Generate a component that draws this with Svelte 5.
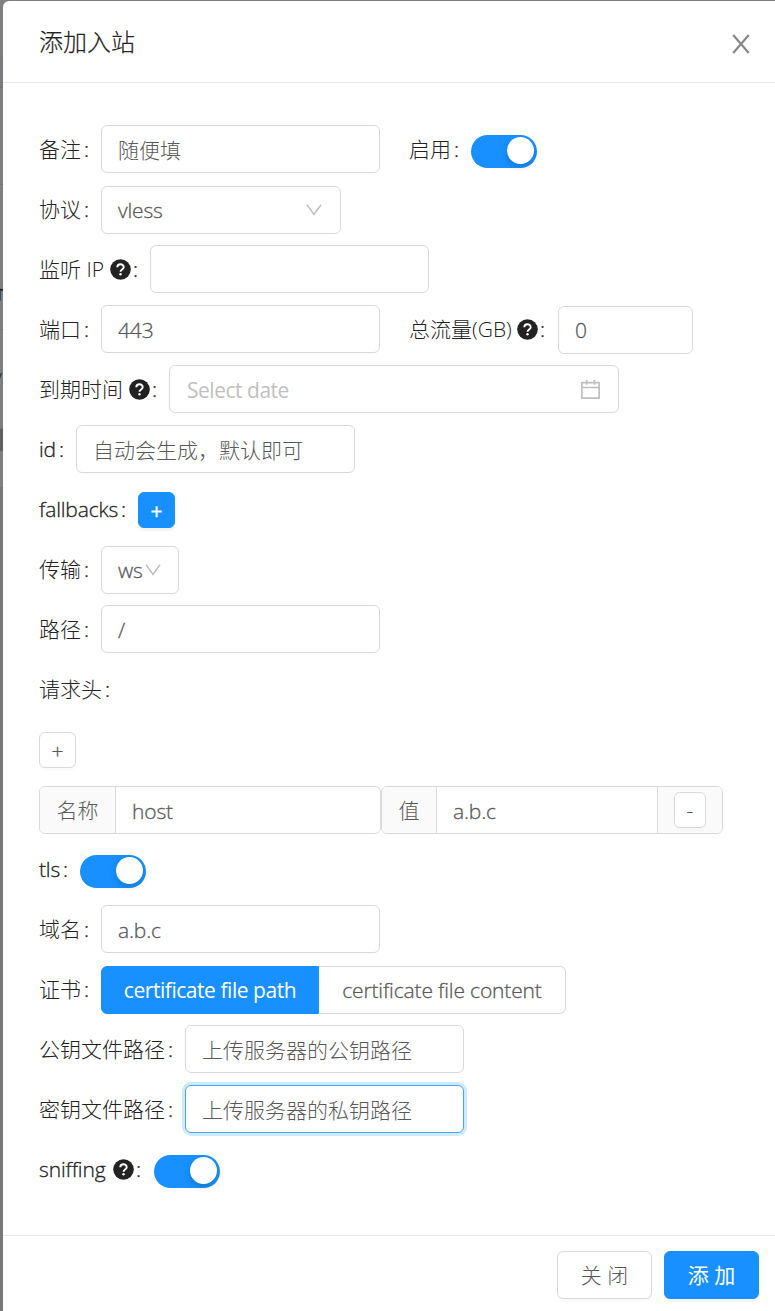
<script>
  const calc = 'M880 184H712v-64c0-4.400-3.600-8-8-8h-56c-4.400 0-8 3.600-8 8v64H384v-64c0-4.400-3.600-8-8-8h-56c-4.400 0-8 3.600-8 8v64H144c-17.700 0-32 14.300-32 32v664c0 17.700 14.300 32 32 32h736c17.700 0 32-14.300 32-32V216c0-17.700-14.300-32-32-32zm-40 656H184V460h656v380zM184 392V256h128v48c0 4.400 3.600 8 8 8h56c4.400 0 8-3.600 8-8v-48h256v48c0 4.400 3.600 8 8 8h56c4.400 0 8-3.600 8-8v-48h128v136H184z';
</script>

{#snippet label(text, width, help)}
  <div class="label">
    <span class="label-text" class:latin={/^[a-z]+$/.test(text)} style="width: {width}px">{text}</span>
    {#if help}
      <svg class="help" viewBox="0 0 21 21"><circle cx="10.500" cy="10.500" r="10.300" fill="#222" /><path d="M7.300 8.300C7.300 4.300 13.700 4.300 13.700 8.200C13.700 10.400 10.500 10.500 10.500 12.700" fill="none" stroke="#fff" stroke-width="1.900" /><circle cx="10.500" cy="15.300" r="1.200" fill="#fff" /></svg>
    {/if}
    <span class="colon">:</span>
  </div>
{/snippet}

{#snippet toggle()}
  <div class="switch"><i></i></div>
{/snippet}

{#snippet arrow()}
  <svg class="arrow" viewBox="0 0 16 12"><path d="M1 .8L8 10.500L15 .8" fill="none" stroke="#bfbfbf" stroke-width="1.500" /></svg>
{/snippet}

<div class="page">
  <div class="backdrop">
    <span class="peek name">备</span>
    <span class="peek slash">/</span>
  </div>
  <div class="modal">
    <header>
      <h1>添加入站</h1>
      <svg class="close" viewBox="0 0 18 20"><path d="M1.200 1L16.800 19M16.800 1L1.200 19" fill="none" stroke="#888" stroke-width="2.200" /></svg>
    </header>
    <main>
      <div class="row">
        {@render label('备注', 42)}
        <div class="input w279">随便填</div>
        <div class="second">{@render label('启用', 42)}{@render toggle()}</div>
      </div>
      <div class="row">
        {@render label('协议', 42)}
        <div class="input select low latin"><span>vless</span>{@render arrow()}</div>
      </div>
      <div class="row">
        {@render label('监听 IP', 65, true)}
        <div class="input w279"></div>
      </div>
      <div class="row">
        {@render label('端口', 42)}
        <div class="input w279 latin">443</div>
        <div class="second">{@render label('总流量(GB)', 102, true)}<div class="input num low latin">0</div></div>
      </div>
      <div class="row">
        {@render label('到期时间', 84, true)}
        <div class="input date"><span>Select date</span><svg viewBox="112 112 800 800"><path d={calc} fill="#bfbfbf" /></svg></div>
      </div>
      <div class="row">
        {@render label('id', 17)}
        <div class="input w279">自动会生成，默认即可</div>
      </div>
      <div class="row">
        {@render label('fallbacks', 79)}
        <div class="btn small primary">+</div>
      </div>
      <div class="row">
        {@render label('传输', 42)}
        <div class="input transport low latin"><span>ws</span>{@render arrow()}</div>
      </div>
      <div class="row">
        {@render label('路径', 42)}
        <div class="input w279 latin">/</div>
      </div>
      <div class="row">{@render label('请求头', 63)}</div>
      <div class="row"><div class="btn small">+</div></div>
      <div class="row">
        <div class="group low">
          <div class="addon name-addon">名称</div>
          <div class="field host latin">host</div>
        </div>
        <div class="group low">
          <div class="addon value-addon">值</div>
          <div class="field value latin">a.b.c</div>
          <div class="addon remove"><div class="btn small minus">-</div></div>
        </div>
      </div>
      <div class="row">{@render label('tls', 21)}{@render toggle()}</div>
      <div class="row">
        {@render label('域名', 42)}
        <div class="input w279 latin">a.b.c</div>
      </div>
      <div class="row">
        {@render label('证书', 42)}
        <div class="radios low"><div class="radio on">certificate file path</div><div class="radio off latin">certificate file content</div></div>
      </div>
      <div class="row">
        {@render label('公钥文件路径', 126)}
        <div class="input w279">上传服务器的公钥路径</div>
      </div>
      <div class="row">
        {@render label('密钥文件路径', 126)}
        <div class="input w279 focus">上传服务器的私钥路径</div>
      </div>
      <div class="row sniffing">{@render label('sniffing', 68, true)}{@render toggle()}</div>
    </main>
    <footer>
      <div class="btn wide">关 闭</div>
      <div class="btn wide primary">添 加</div>
    </footer>
  </div>
</div>

<style>
  :global(body) { background: #7f7f7f; }
  .page, .page * { box-sizing: border-box; }
  .page {
    position: relative;
    width: 775px;
    height: 1311px;
    padding: 1px 0 0 3px;
    overflow: hidden;
    font: 300 21px/32px 'Open Sans', 'Noto Sans CJK SC', sans-serif;
    color: #222;
    white-space: nowrap;
  }
  .backdrop {
    position: absolute;
    inset: 0;
    background: linear-gradient(#7f7f7f 0 56px, #787878 56px 57px, #7c7c80 57px 87px, #747474 87px 88px, #7f7f7f 88px 184px, #747474 184px 185px, #7f7f7f 185px 329px, #757575 329px 330px, #7f7f7f 330px 427px, #777 427px 429px, #606060 429px 451px, #7f7f7f 451px 487px, #757575 487px 488px, #79797b 488px);
  }
  .peek { position: absolute; color: #222; }
  .peek.name { left: -17px; top: 274px; font-weight: 500; }
  .peek.slash { left: -5px; top: 364px; }
  .latin { letter-spacing: -.15px; -webkit-text-stroke: .3px currentColor; }
  .modal {
    position: relative;
    height: 1310px;
    background: #fff;
    border-radius: 6px 0 0 0;
    display: flex;
    flex-direction: column;
  }
  header {
    height: 82px;
    border-bottom: 1px solid #e8e8e8;
    padding: 0 25px 0 36px;
    display: flex;
    align-items: center;
    justify-content: space-between;
  }
  h1 { margin: 1px 0 0; font-size: 24px; font-weight: 300; line-height: 36px; -webkit-text-stroke: .2px currentColor; }
  .close { width: 18px; height: 20px; margin-top: 4px; }
  main { height: 1152px; padding: 36px 36px 0; }
  .row { height: 60px; display: flex; align-items: center; }
  .label { display: flex; align-items: center; height: 32px; }
  .label-text { display: block; }
  .help { width: 21px; height: 21px; margin-left: 6px; margin-right: -1px; }
  .colon { width: 20px; padding-left: 3px; -webkit-text-stroke: .3px currentColor; }
  .second .help + .colon, .sniffing .colon { width: 21px; }
  .second { display: flex; align-items: center; margin-left: 29px; }
  .input {
    height: 48px;
    border: 1px solid #d9d9d9;
    border-radius: 6px;
    padding: 2px 16px 0;
    display: flex;
    align-items: center;
    color: #595959;
    background: #fff;
  }
  .input.low { padding-top: 0; }
  .low { position: relative; top: 1px; }
  .w279 { width: 279px; }
  .select { width: 240px; justify-content: space-between; padding-right: 18px; }
  .arrow { width: 16px; height: 12px; margin-top: -1px; }
  .num { width: 135px; }
  .date { width: 450px; justify-content: space-between; padding: 2px 18px 0 17px; color: #bfbfbf; }
  .date span { font-weight: 400; letter-spacing: -.48px; }
  .date svg { width: 19px; height: 19px; margin-top: -2px; }
  .transport { width: 78px; padding-right: 0; gap: 2px; }
  .focus { border-color: #40a9ff; box-shadow: 0 0 0 3px rgba(24, 144, 255, .2); }
  .switch { width: 66px; height: 33px; border-radius: 17px; background: #1890ff; position: relative; top: 2px; display: flex; justify-content: flex-end; padding: 2px 3px; }
  .switch i { width: 27px; height: 27px; border-radius: 50%; background: #fff; box-shadow: 0 3px 6px rgba(0, 35, 11, .2); }
  .btn { display: flex; align-items: center; justify-content: center; border: 1px solid #d9d9d9; border-radius: 6px; background: #fff; color: #595959; box-shadow: 0 3px 0 rgba(0, 0, 0, .016); }
  .btn.small { width: 37px; height: 36px; padding-top: 2px; position: relative; top: 1px; -webkit-text-stroke: .3px currentColor; }
  .btn.wide { width: 95px; height: 48px; }
  .btn.primary { background: #1890ff; border-color: #1890ff; color: #fff; font-weight: 400; box-shadow: 0 3px 0 rgba(0, 0, 0, .045); }
  .btn.small.minus { width: 32px; top: 0; padding-top: 0; }
  .group { height: 48px; display: flex; border: 1px solid #d9d9d9; border-radius: 6px; overflow: hidden; color: #595959; }
  .addon { background: #fafafa; display: flex; align-items: center; justify-content: center; }
  .field { border-left: 1px solid #d9d9d9; padding: 2px 16px 0; display: flex; align-items: center; }
  .name-addon { width: 75px; }
  .host { width: 265px; }
  .value-addon { width: 54px; }
  .value { width: 221px; }
  .remove { width: 65px; border-left: 1px solid #d9d9d9; }
  .radios { display: flex; height: 48px; }
  .radio { display: flex; align-items: center; justify-content: center; border: 1px solid #d9d9d9; color: #595959; }
  .radio.on { width: 218px; background: #1890ff; border-color: #1890ff; color: #fff; border-radius: 6px 0 0 6px; font-weight: 400; letter-spacing: -.45px; }
  .radio.off { width: 247px; border-left: 0; border-radius: 0 6px 6px 0; }
  footer { height: 76px; border-top: 1px solid #e8e8e8; padding: 15px 16px 0; display: flex; justify-content: flex-end; gap: 12px; }
</style>
